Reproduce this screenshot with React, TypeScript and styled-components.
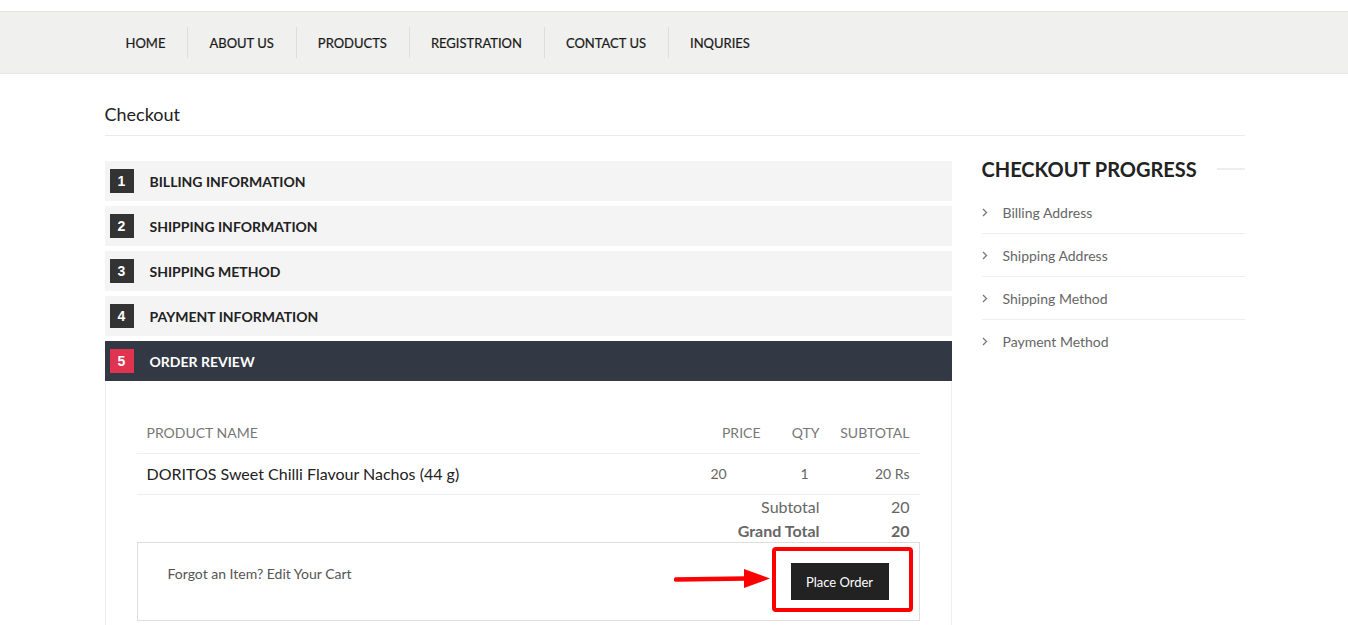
import React from "react";
import styled, { createGlobalStyle } from "styled-components";

const Global = createGlobalStyle`
  html, body { margin: 0; padding: 0; background: #fff; }
  body { font-family: Lato, "Open Sans", Arial, sans-serif; color: #333; }
  * { box-sizing: border-box; }
`;

const Page = styled.div`
  padding-top: 11px;
`;

const NavBar = styled.nav`
  background: #f0f0ee;
  border-top: 1px solid #e6e6e6;
  border-bottom: 1px solid #e8e8e8;
  padding: 15px 0;
`;

const Container = styled.div`
  width: 1141px;
  padding-left: 1px;
  margin: 0 auto;
`;

const NavList = styled.ul`
  list-style: none;
  margin: 0;
  padding: 0;
  display: flex;
`;

const NavItem = styled.li<{ $first?: boolean }>`
  height: 31px;
  line-height: 33px;
  padding: 0 22px 0 21px;
  border-left: ${(p) => (p.$first ? "none" : "1px solid #dedede")};
  font-size: 13px;
  color: #1a1a1a;
  text-transform: uppercase;
  -webkit-text-stroke: 0.2px #1a1a1a;
`;

const PageTitle = styled.h1`
  margin: 28px 0 0;
  padding-bottom: 9px;
  border-bottom: 1px solid #ebebeb;
  font-size: 18px;
  font-weight: 400;
  line-height: 24px;
  color: #222;
`;

const Columns = styled.div`
  display: grid;
  grid-template-columns: 847px 263px;
  column-gap: 30px;
  margin-top: 25px;
`;

const Steps = styled.div`
  display: flex;
  flex-direction: column;
  gap: 5px;
`;

const StepHead = styled.div<{ $active?: boolean }>`
  height: 40px;
  display: flex;
  align-items: center;
  padding-left: 5px;
  gap: 16px;
  background: ${(p) => (p.$active ? "#333944" : "#f4f4f4")};
  color: ${(p) => (p.$active ? "#fff" : "#222")};
  font-size: 14px;
  font-weight: 700;
  text-transform: uppercase;
`;

const StepNum = styled.span<{ $active?: boolean }>`
  width: 24px;
  height: 24px;
  display: flex;
  align-items: center;
  justify-content: center;
  background: ${(p) => (p.$active ? "#e03350" : "#333")};
  color: #fff;
  font-family: Arial, "Liberation Sans", sans-serif;
  font-weight: 700;
  font-size: 14px;
`;

const ReviewBody = styled.div`
  margin-top: -5px;
  border-left: 1px solid #eeeeee;
  border-right: 1px solid #eeeeee;
  padding: 32px 31px 40px 31px;
`;

const Table = styled.table`
  width: 100%;
  border-collapse: collapse;
`;

const Th = styled.th<{ $align?: string; $w?: number }>`
  height: 40px;
  padding: 0 10px;
  text-align: ${(p) => p.$align || "left"};
  width: ${(p) => (p.$w ? `${p.$w}px` : "auto")};
  font-size: 14px;
  font-weight: 400;
  color: #777;
  text-transform: uppercase;
  border-bottom: 1px solid #eeeeee;
`;

const Td = styled.td<{ $align?: string; $pl?: number; $pr?: number }>`
  height: 41px;
  padding: 0 ${(p) => p.$pr ?? 10}px 0 ${(p) => p.$pl ?? 10}px;
  text-align: ${(p) => p.$align || "left"};
  font-size: ${(p) => (p.$align ? "14px" : "16px")};
  color: ${(p) => (p.$align ? "#666" : "#222")};
  border-bottom: 1px solid #eeeeee;
`;

const TotalCell = styled.td<{ $bold?: boolean }>`
  height: 24px;
  padding: 0 10px;
  text-align: right;
  font-size: 16px;
  font-weight: ${(p) => (p.$bold ? 700 : 400)};
  color: #666;
`;

const Footer = styled.div`
  border: 1px solid #dddddd;
  padding: 20px 30px 20px 30px;
  display: flex;
  justify-content: space-between;
  align-items: flex-start;
`;

const EditLink = styled.span`
  font-size: 14px;
  line-height: 20px;
  color: #555;
  margin-top: 1px;
`;

const ButtonWrap = styled.div`
  position: relative;
`;

const PlaceOrder = styled.button`
  display: block;
  width: 98px;
  height: 37px;
  border: none;
  background: #222;
  color: #fff;
  font-family: Lato, sans-serif;
  font-size: 13px;
  cursor: pointer;
`;

const Highlight = styled.div`
  position: absolute;
  top: -16px;
  left: -19px;
  right: -24px;
  bottom: -12px;
  border: 4px solid #ff0000;
  border-radius: 4px;
  pointer-events: none;
`;

const Arrow = styled.svg`
  position: absolute;
  left: -117px;
  top: 4px;
`;

const Side = styled.aside`
  margin-top: -4px;
`;

const SideTitleRow = styled.div`
  display: flex;
  align-items: center;
  gap: 20px;
`;

const SideTitle = styled.h2`
  margin: 0;
  font-size: 20px;
  line-height: 24px;
  font-weight: 700;
  color: #222;
  text-transform: uppercase;
  white-space: nowrap;
`;

const TitleRule = styled.span`
  flex: 1;
  height: 2px;
  background: #eeeeee;
`;

const ProgressList = styled.ul`
  list-style: none;
  margin: 10px 0 0;
  padding: 0;
`;

const ProgressItem = styled.li<{ $last?: boolean }>`
  display: flex;
  align-items: center;
  gap: 15px;
  height: 43px;
  border-bottom: ${(p) => (p.$last ? "none" : "1px solid #eeeeee")};
  font-size: 14px;
  color: #666;
`;

const Chevron = () => (
  <svg width="6" height="9" viewBox="0 0 6 9">
    <path d="M1 1l3.5 3.5L1 8" stroke="#777" strokeWidth="1.3" fill="none" />
  </svg>
);

const navItems = ["Home", "About Us", "Products", "Registration", "Contact Us", "Inquries"];
const steps = ["Billing Information", "Shipping Information", "Shipping Method", "Payment Information"];
const progress = ["Billing Address", "Shipping Address", "Shipping Method", "Payment Method"];

export default function App() {
  return (
    <Page>
      <Global />
      <NavBar>
        <Container>
          <NavList>
            {navItems.map((n, i) => (
              <NavItem key={n} $first={i === 0}>
                {n}
              </NavItem>
            ))}
          </NavList>
        </Container>
      </NavBar>
      <Container>
        <PageTitle>Checkout</PageTitle>
        <Columns>
          <Steps>
            {steps.map((s, i) => (
              <StepHead key={s}>
                <StepNum>{i + 1}</StepNum>
                {s}
              </StepHead>
            ))}
            <StepHead $active>
              <StepNum $active>5</StepNum>
              Order Review
            </StepHead>
            <ReviewBody>
              <Table>
                <thead>
                  <tr>
                    <Th>Product Name</Th>
                    <Th $align="right" $w={81}>Price</Th>
                    <Th $align="right" $w={59}>Qty</Th>
                    <Th $align="right" $w={90}>Subtotal</Th>
                  </tr>
                </thead>
                <tbody>
                  <tr>
                    <Td>DORITOS Sweet Chilli Flavour Nachos (44 g)</Td>
                    <Td $align="left" $pl={21}>20</Td>
                    <Td $align="right" $pr={21}>1</Td>
                    <Td $align="right">20 Rs</Td>
                  </tr>
                  <tr>
                    <TotalCell colSpan={3}>Subtotal</TotalCell>
                    <TotalCell>20</TotalCell>
                  </tr>
                  <tr>
                    <TotalCell colSpan={3} $bold>Grand Total</TotalCell>
                    <TotalCell $bold>20</TotalCell>
                  </tr>
                </tbody>
              </Table>
              <Footer>
                <EditLink>Forgot an Item? Edit Your Cart</EditLink>
                <ButtonWrap>
                  <PlaceOrder>Place Order</PlaceOrder>
                  <Highlight />
                  <Arrow width="98" height="24" viewBox="0 0 98 24">
                    <path d="M2 12.5 L72 11.5" stroke="#ff0000" strokeWidth="4.5" strokeLinecap="round" />
                    <path d="M70 2 L96 11.5 L70 21 Z" fill="#ff0000" />
                  </Arrow>
                </ButtonWrap>
              </Footer>
            </ReviewBody>
          </Steps>
          <Side>
            <SideTitleRow>
              <SideTitle>Checkout Progress</SideTitle>
              <TitleRule />
            </SideTitleRow>
            <ProgressList>
              {progress.map((p, i) => (
                <ProgressItem key={p} $last={i === progress.length - 1}>
                  <Chevron />
                  {p}
                </ProgressItem>
              ))}
            </ProgressList>
          </Side>
        </Columns>
      </Container>
    </Page>
  );
}
